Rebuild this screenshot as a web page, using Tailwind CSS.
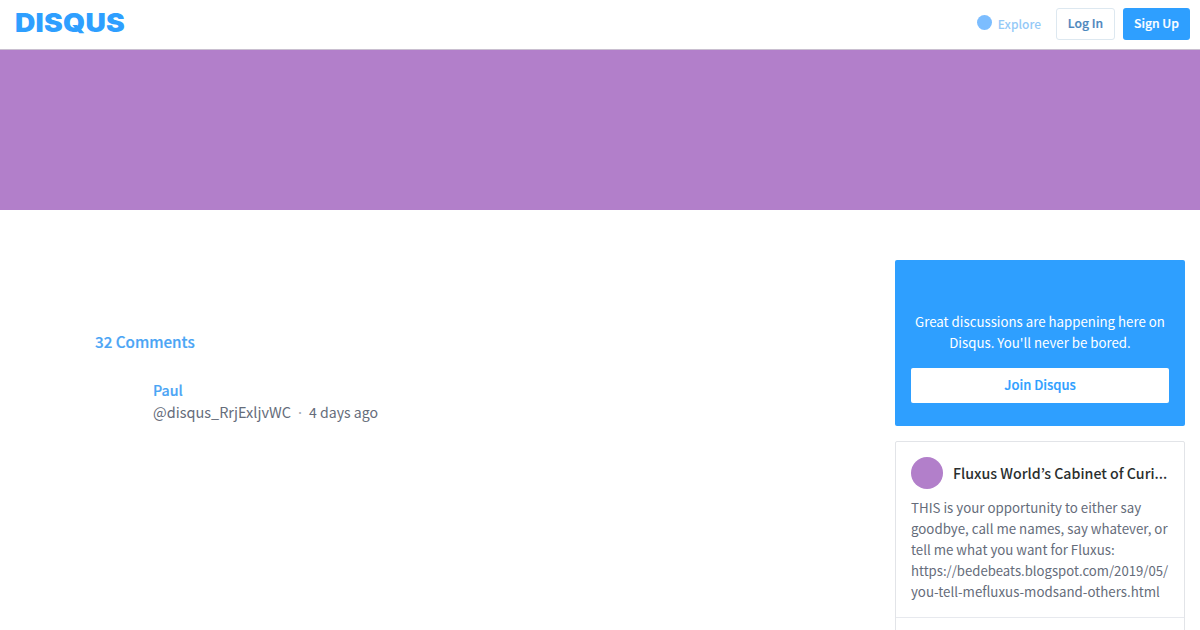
<!DOCTYPE html>
<html><head><meta charset="utf-8"><script src="https://cdn.jsdelivr.net/npm/@tailwindcss/browser@4"></script></head>
<body class="bg-white overflow-hidden h-[630px] font-['Noto_Sans_CJK_JP',sans-serif] text-[#656c7a]">
<header class="h-[50px] flex items-center justify-between pl-[15px] pr-[10px] border-b border-[#c9bfd0]">
  <span class="font-['Inter',sans-serif] font-black text-[25.5px] leading-none text-[#2e9fff] tracking-[0.2px] -mt-[3px] scale-x-[1.105] origin-left">DISQUS</span>
  <nav class="flex items-center text-[12.2px] font-medium -mt-[2px]">
    <span class="w-[15px] h-[15px] rounded-full bg-[#7cbdff] mr-[6px] -mt-[2px]"></span>
    <span class="text-[#94c9f7] mr-[15px] leading-[18px] text-[12px]">Explore</span>
    <span class="h-[32px] w-[59px] flex items-center justify-center rounded-[3px] border border-[#dde8f0] text-[#4c87bd] mr-[8px] [-webkit-text-stroke:0.2px]">Log In</span>
    <span class="h-[32px] w-[67px] flex items-center justify-center rounded-[3px] bg-[#2e9fff] text-white [-webkit-text-stroke:0.2px]">Sign Up</span>
  </nav>
</header>
<div class="h-[160px] bg-[#b27fca]"></div>
<main class="flex justify-between pl-[95px] pr-[15px] pt-[50px]">
  <section class="pt-[69px]">
    <h2 class="text-[15.2px] leading-[24px] font-medium text-[#4ba5f5] [-webkit-text-stroke:0.2px]">32 Comments</h2>
    <div class="ml-[58px] mt-[26px]">
      <div class="text-[14.2px] leading-[22px] font-medium text-[#4ba5f5] [-webkit-text-stroke:0.2px]">Paul</div>
      <div class="text-[14.5px] leading-[22px]">@disqus_RrjExljvWC<span class="text-[#a5abb5] mx-[5px]">·</span><span class="text-[14.1px]">4 days ago</span></div>
    </div>
  </section>
  <aside class="w-[290px]">
    <div class="h-[166px] bg-[#2e9fff] rounded-[2px] px-[16px] pt-[51px] text-center text-white">
      <p class="text-[13.25px] leading-[21px]">Great discussions are happening here on Disqus. You'll never be bored.</p>
      <div class="mt-[15px] h-[35px] flex items-center justify-center bg-white rounded-[2px] text-[#2e9fff] text-[13px] font-medium [-webkit-text-stroke:0.2px] pb-[1px]">Join Disqus</div>
    </div>
    <div class="mt-[15px] h-[300px] border border-[#e2e4e8] rounded-[2px]">
      <div class="px-[15px] pt-[15px]">
        <div class="flex items-center gap-[10px]">
          <span class="w-[32px] h-[32px] rounded-full bg-[#b27fca] shrink-0"></span>
          <span class="text-[14.2px] font-medium text-[#2a2e2e] whitespace-nowrap leading-[22px]">Fluxus World’s Cabinet of Curi...</span>
        </div>
        <p class="mt-[8px] text-[13.3px] leading-[21px]">THIS is your opportunity to either say goodbye, call me names, say whatever, or tell me what you want for Fluxus: <span class="text-[13.15px]">https://bedebeats.blogspot.com/2019/05/</span> you-tell-mefluxus-modsand-others.html</p>
      </div>
      <div class="mt-[15px] border-t border-[#e7e9ee]"></div>
    </div>
  </aside>
</main>
</body></html>
